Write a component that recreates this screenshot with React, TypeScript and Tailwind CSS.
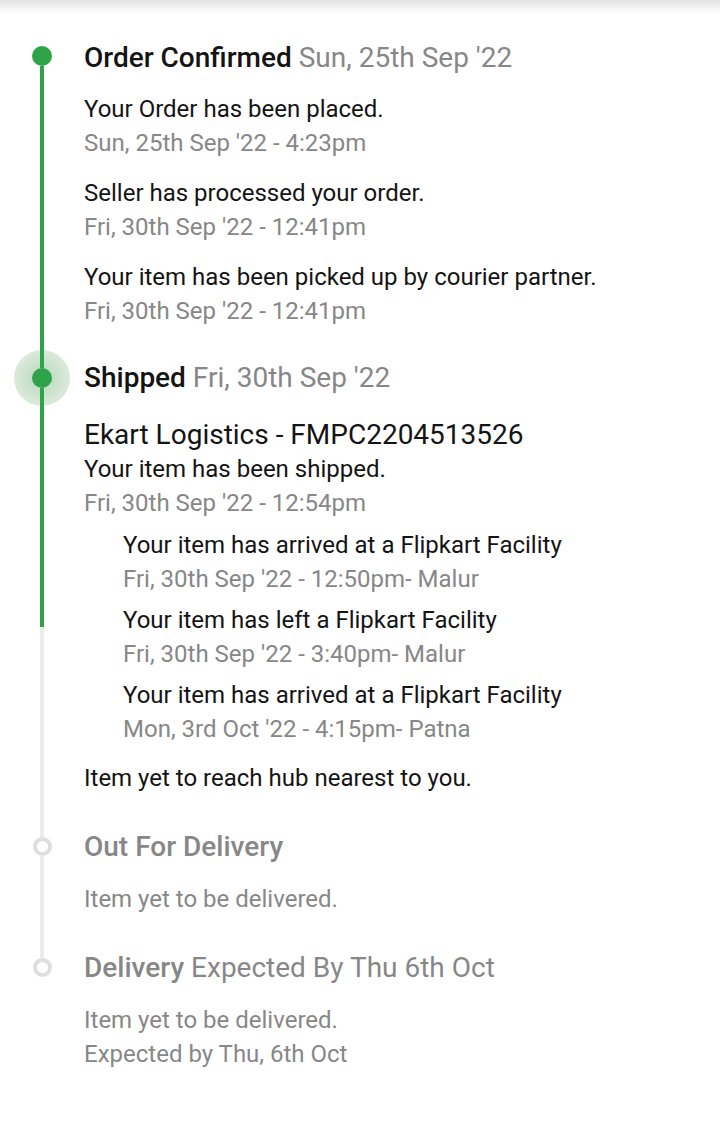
import React from "react";

const GREEN = "bg-[#2fa34a]";

function Event({ text, sub, indent }: { text: string; sub: string; indent?: boolean }) {
  return (
    <div className={indent ? "ml-[39px]" : ""}>
      <p className="text-[24px] leading-[34px] text-[#141414]">{text}</p>
      <p className="text-[24px] leading-[34px] text-[#878787]">{sub}</p>
    </div>
  );
}

export default function App() {
  return (
    <div className="min-h-[1122px] bg-white font-['Roboto',sans-serif]">
      <div className="h-[14px] bg-gradient-to-b from-[#e2e2e2] to-white" />
      <div className="pt-[27px]">
        {/* Order Confirmed */}
        <div className="flex">
          <div className="flex w-[84px] shrink-0 flex-col items-center">
            <div className="mt-[5px] size-[20px] rounded-full bg-[#2fa34a]" />
            <div className={`relative z-10 w-[4px] flex-1 ${GREEN}`} />
          </div>
          <div className="flex-1 pb-[33px]">
            <h2 className="text-[28px] font-medium leading-[34px] text-[#141414]">
              Order Confirmed <span className="font-normal text-[#878787]">Sun, 25th Sep '22</span>
            </h2>
            <div className="mt-[17px] flex flex-col gap-[16px]">
              <Event text="Your Order has been placed." sub="Sun, 25th Sep '22 - 4:23pm" />
              <Event text="Seller has processed your order." sub="Fri, 30th Sep '22 - 12:41pm" />
              <Event text="Your item has been picked up by courier partner." sub="Fri, 30th Sep '22 - 12:41pm" />
            </div>
          </div>
        </div>

        {/* Shipped */}
        <div className="flex">
          <div className="flex w-[84px] shrink-0 flex-col items-center">
            <div className={`relative z-10 h-[7px] w-[4px] ${GREEN}`} />
            <div className="relative size-[20px]">
              <div className="absolute -inset-[18px] rounded-full bg-[radial-gradient(circle,#b6d9ba_0%,#d3e6d4_55%,#e9f2e9_100%)]" />
              <div className="relative z-10 size-[20px] rounded-full bg-[#2fa34a]" />
            </div>
            <div className={`relative z-10 h-[239px] w-[4px] ${GREEN}`} />
            <div className="w-[4px] flex-1 bg-[#ebebeb]" />
          </div>
          <div className="flex-1 pb-[35px]">
            <h2 className="text-[28px] font-medium leading-[34px] text-[#141414]">
              Shipped <span className="font-normal text-[#878787]">Fri, 30th Sep '22</span>
            </h2>
            <p className="mt-[22px] text-[28px] leading-[35px] text-[#141414]">Ekart Logistics - FMPC2204513526</p>
            <Event text="Your item has been shipped." sub="Fri, 30th Sep '22 - 12:54pm" />
            <div className="mt-[8px] flex flex-col gap-[7px]">
              <Event indent text="Your item has arrived at a Flipkart Facility" sub="Fri, 30th Sep '22 - 12:50pm- Malur" />
              <Event indent text="Your item has left a Flipkart Facility" sub="Fri, 30th Sep '22 - 3:40pm- Malur" />
              <Event indent text="Your item has arrived at a Flipkart Facility" sub="Mon, 3rd Oct '22 - 4:15pm- Patna" />
            </div>
            <p className="mt-[15px] text-[24px] leading-[34px] text-[#141414]">Item yet to reach hub nearest to you.</p>
          </div>
        </div>

        {/* Out For Delivery */}
        <div className="flex">
          <div className="flex w-[84px] shrink-0 flex-col items-center">
            <div className="h-[7px] w-[4px] bg-[#ebebeb]" />
            <div className="size-[19px] rounded-full border-[4px] border-[#dedede]" />
            <div className="w-[4px] flex-1 bg-[#ebebeb]" />
          </div>
          <div className="flex-1 pb-[35px]">
            <h2 className="text-[28px] font-medium leading-[34px] text-[#878787]">Out For Delivery</h2>
            <p className="mt-[18px] text-[24px] leading-[34px] text-[#878787]">Item yet to be delivered.</p>
          </div>
        </div>

        {/* Delivery */}
        <div className="flex">
          <div className="flex w-[84px] shrink-0 flex-col items-center">
            <div className="h-[7px] w-[4px] bg-[#ebebeb]" />
            <div className="size-[19px] rounded-full border-[4px] border-[#dedede]" />
          </div>
          <div className="flex-1 pb-[35px]">
            <h2 className="text-[28px] font-medium leading-[34px] text-[#878787]">
              Delivery <span className="font-normal">Expected By Thu 6th Oct</span>
            </h2>
            <div className="mt-[18px]">
              <p className="text-[24px] leading-[34px] text-[#878787]">Item yet to be delivered.</p>
              <p className="text-[24px] leading-[34px] text-[#878787]">Expected by Thu, 6th Oct</p>
            </div>
          </div>
        </div>
      </div>
    </div>
  );
}
